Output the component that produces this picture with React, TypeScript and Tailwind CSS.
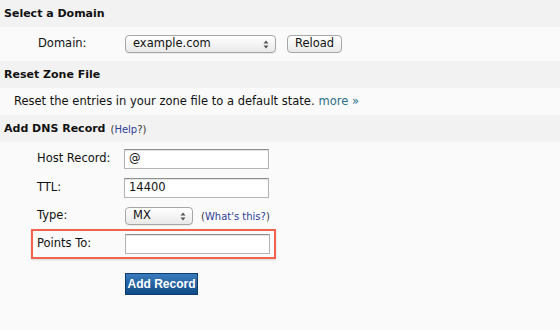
import React from "react";

function SectionHeader({ title, help }: { title: string; help?: boolean }) {
  return (
    <div className="h-[27px] bg-[#f2f2f2] flex items-center pl-[4px] pt-[2px]">
      <span className="font-bold text-[11px] text-[#111]">{title}</span>
      {help && (
        <span className="ml-[5px] text-[10px] text-[#333]">
          (<span className="text-[#2f3f99]">Help</span>?)
        </span>
      )}
    </div>
  );
}

function Arrows() {
  return (
    <svg width="6" height="9" viewBox="0 0 6 9" className="shrink-0">
      <path d="M3 0.5 L5.5 3.5 H0.5 Z" fill="#555" />
      <path d="M3 8.5 L5.5 5.5 H0.5 Z" fill="#555" />
    </svg>
  );
}

function FakeSelect({ value, width }: { value: string; width: string }) {
  return (
    <div
      className={`${width} h-[18px] rounded-[4px] border border-[#a6a6a6] bg-gradient-to-b from-white to-[#e9e9e9] flex items-center justify-between pl-[7px] pr-[6px] shadow-[0_1px_0_rgba(0,0,0,0.06)]`}
    >
      <span className="text-[11.5px] text-[#111]">{value}</span>
      <Arrows />
    </div>
  );
}

function TextInput({ value }: { value?: string }) {
  return (
    <div className="w-[145px] h-[20px] bg-white border border-[#b4b4b4] border-t-[#8e8e8e] flex items-center pl-[4px] shadow-[inset_0_1px_1px_rgba(0,0,0,0.12)]">
      <span className="text-[11.5px] text-[#111]">{value}</span>
    </div>
  );
}

export default function App() {
  return (
    <div
      className="w-[560px] h-[330px] bg-[#fafafa] text-[#111] text-[11.5px] overflow-hidden"
      style={{ fontFamily: '"DejaVu Sans", Verdana, sans-serif' }}
    >
      <SectionHeader title="Select a Domain" />
      <div className="h-[34px] flex items-center">
        <span className="ml-[38px] w-[87px]">Domain:</span>
        <FakeSelect value="example.com" width="w-[151px]" />
        <div className="ml-[11px] h-[18px] w-[55px] rounded-[4px] border border-[#a6a6a6] bg-gradient-to-b from-white to-[#e9e9e9] flex items-center justify-center text-[11.5px]">
          Reload
        </div>
      </div>

      <SectionHeader title="Reset Zone File" />
      <div className="h-[27px] flex items-center pl-[14px]">
        Reset the entries in your zone file to a default state.{" "}
        <span className="ml-[4px] text-[#2b7089]">more »</span>
      </div>

      <SectionHeader title="Add DNS Record" help />
      <div className="pt-[7px] flex flex-col">
        <div className="h-[20px] flex items-center">
          <span className="ml-[37px] w-[87px]">Host Record:</span>
          <TextInput value="@" />
        </div>
        <div className="mt-[9px] h-[20px] flex items-center">
          <span className="ml-[37px] w-[87px]">TTL:</span>
          <TextInput value="14400" />
        </div>
        <div className="mt-[9px] h-[18px] flex items-center">
          <span className="ml-[37px] w-[88px]">Type:</span>
          <FakeSelect value="MX" width="w-[68px]" />
          <span className="ml-[8px] text-[10px] text-[#333]">
            (<span className="text-[#2f3f99]">What's this?</span>)
          </span>
        </div>
        <div className="mt-[4px] ml-[31px] w-[245px] h-[30px] border-[2px] border-[#f1624f] flex items-center shadow-[0_1px_2px_rgba(0,0,0,0.15)]">
          <span className="ml-[4px] w-[88px]">Points To:</span>
          <TextInput />
        </div>
        <div className="mt-[14px] ml-[125px] w-[73px] h-[22px] border border-[#0d3d6e] bg-gradient-to-b from-[#3a7bbd] to-[#0e4a85] flex items-center justify-center">
          <span
            className="text-white font-bold"
            style={{ fontFamily: '"Liberation Sans", Arial, sans-serif', fontSize: "12px" }}
          >
            Add Record
          </span>
        </div>
      </div>
    </div>
  );
}
